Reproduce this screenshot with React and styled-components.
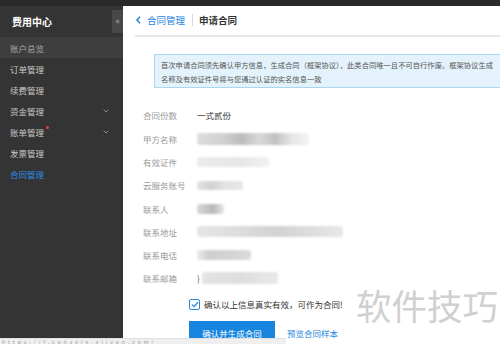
import React from "react";
import styled, { createGlobalStyle } from "styled-components";

const Global = createGlobalStyle`
  html, body { margin: 0; padding: 0; background: #fff; }
  body { font-family: "Noto Sans CJK SC", "Noto Sans", sans-serif; }
  * { box-sizing: border-box; }
`;

const Page = styled.div`
  position: relative;
  width: 500px;
  height: 344px;
  overflow: hidden;
  display: flex;
  flex-direction: column;
`;

const TopBar = styled.div`
  height: 6px;
  background: #2a2a2a;
  flex: none;
`;

const Body = styled.div`
  flex: 1;
  display: flex;
  min-height: 0;
`;

const Sidebar = styled.aside`
  width: 123px;
  flex: none;
  background: #343434;
  position: relative;
  display: flex;
  flex-direction: column;
`;

const SideHead = styled.div`
  height: 31px;
  display: flex;
  align-items: center;
  padding-left: 12px;
  color: #fff;
  font-weight: 700;
  font-size: 10px;
`;

const Collapse = styled.div`
  position: absolute;
  right: 0;
  top: 4px;
  width: 11px;
  height: 23px;
  background: #484848;
  color: #aaa;
  font-size: 8px;
  display: flex;
  align-items: center;
  justify-content: center;
  font-family: "DejaVu Sans", sans-serif;
`;

const MenuItem = styled.div`
  height: 21px;
  display: flex;
  align-items: center;
  padding-left: 10px;
  padding-right: 14px;
  font-size: 8.5px;
  color: ${(p) => (p.$active ? "#2d8ce8" : p.$current ? "#a8a8a8" : "#c9c9c9")};
  background: ${(p) => (p.$current ? "#3e3e3e" : "transparent")};
  position: relative;
`;

const Dot = styled.span`
  width: 3px;
  height: 3px;
  border-radius: 50%;
  background: #e64040;
  align-self: flex-start;
  margin-top: 5px;
  margin-left: 2px;
`;

const Chevron = styled.svg`
  margin-left: auto;
  width: 6px;
  height: 4px;
`;

const Main = styled.main`
  flex: 1;
  background: #fff;
  display: flex;
  flex-direction: column;
  padding-left: 12px;
`;

const Crumbs = styled.div`
  height: 31px;
  display: flex;
  align-items: center;
  font-size: 9.5px;
  border-bottom: 2px solid #e8e8e8;
  padding-left: 1px;
`;

const Back = styled.svg`
  width: 5px;
  height: 8px;
  margin-right: 6px;
`;

const CrumbLink = styled.span`
  color: #1d86df;
`;

const Sep = styled.span`
  width: 1px;
  height: 12px;
  background: #d8d8d8;
  margin: 0 6px 0 7px;
`;

const CrumbTitle = styled.span`
  color: #333;
  font-weight: 700;
`;

const Notice = styled.div`
  margin: 17px 0 0 19px;
  height: 34px;
  background: #e3f2fb;
  border: 1px solid #a9d7f1;
  border-right: none;
  padding: 3px 0 0 6px;
  font-size: 7.3px;
  line-height: 14.5px;
  color: #555;
  white-space: nowrap;
  overflow: hidden;
`;

const Form = styled.div`
  margin-top: 16px;
  padding-left: 8px;
  display: flex;
  flex-direction: column;
`;

const Row = styled.div`
  height: 23.3px;
  display: flex;
  align-items: center;
  font-size: 8.5px;
`;

const Label = styled.span`
  width: 54px;
  color: #9a9a9a;
  flex: none;
`;

const Value = styled.span`
  color: #333;
  display: flex;
  align-items: center;
`;

const Blur = styled.span`
  display: inline-block;
  height: ${(p) => p.$h || 11}px;
  width: ${(p) => p.$w}px;
  border-radius: 3px;
  background: ${(p) => p.$bg};
  filter: blur(1.2px);
`;

const Brace = styled.span`
  color: #666;
  margin-right: 2px;
  font-size: 8px;
`;

const CheckRow = styled.div`
  margin-top: 2px;
  padding-left: 54px;
  height: 24px;
  display: flex;
  align-items: center;
  font-size: 8.5px;
  color: #333;
  white-space: nowrap;
`;

const Box = styled.span`
  width: 11px;
  height: 11px;
  border: 1px solid #2a8ae0;
  border-radius: 2px;
  display: flex;
  align-items: center;
  justify-content: center;
  margin-right: 4px;
  background: #fff;
`;

const Actions = styled.div`
  margin-top: 5px;
  padding-left: 54px;
  display: flex;
  align-items: center;
  gap: 12px;
`;

const Primary = styled.button`
  width: 86px;
  height: 23px;
  border: none;
  background: #1785e0;
  color: #fff;
  font-family: inherit;
  font-size: 8.5px;
  padding: 0;
`;

const LinkText = styled.span`
  color: #1d86df;
  font-size: 8.5px;
`;

const Watermark = styled.div`
  position: absolute;
  left: 356px;
  top: 281px;
  font-size: 35.5px;
  line-height: 48px;
  color: #d0d0d0;
  white-space: nowrap;
  pointer-events: none;
`;

const StatusBar = styled.div`
  position: absolute;
  left: 0;
  bottom: 0;
  width: 286px;
  height: 6px;
  background: #efefef;
  border-top: 1px solid #e0e0e0;
  font-size: 5px;
  line-height: 6px;
  color: #999;
  padding-left: 2px;
  overflow: hidden;
  white-space: nowrap;
  letter-spacing: 3px;
`;

const menu = [
  { t: "账户总览", current: true },
  { t: "订单管理" },
  { t: "续费管理" },
  { t: "资金管理", chevron: true },
  { t: "账单管理", chevron: true, dot: true },
  { t: "发票管理" },
  { t: "合同管理", active: true },
];

const ChevronDown = () => (
  <Chevron viewBox="0 0 6 4">
    <path d="M0.6 0.6 L3 3 L5.4 0.6" fill="none" stroke="#8a8a8a" strokeWidth="1" />
  </Chevron>
);

export default function App() {
  return (
    <Page>
      <Global />
      <TopBar />
      <Body>
        <Sidebar>
          <SideHead>费用中心</SideHead>
          <Collapse>«</Collapse>
          {menu.map((m) => (
            <MenuItem key={m.t} $current={m.current} $active={m.active}>
              {m.t}
              {m.dot && <Dot />}
              {m.chevron && <ChevronDown />}
            </MenuItem>
          ))}
        </Sidebar>
        <Main>
          <Crumbs>
            <Back viewBox="0 0 5 8">
              <path d="M4 0.7 L1 4 L4 7.3" fill="none" stroke="#1d86df" strokeWidth="1.5" />
            </Back>
            <CrumbLink>合同管理</CrumbLink>
            <Sep />
            <CrumbTitle>申请合同</CrumbTitle>
          </Crumbs>
          <Notice>
            首次申请合同须先确认甲方信息，生成合同（框架协议），此类合同唯一且不可自行作废。框架协议生成
            <br />
            名称及有效证件号将与您通过认证的实名信息一致
          </Notice>
          <Form>
            <Row>
              <Label>合同份数</Label>
              <Value>一式贰份</Value>
            </Row>
            <Row>
              <Label>甲方名称</Label>
              <Value>
                <Blur $w={112} $h={12} $bg="linear-gradient(90deg,#ddd 0%,#cfcfcf 25%,#bbb 40%,#d8d8d8 55%,#c2c2c2 70%,#e6e6e6 85%,#f4f4f4 100%)" />
              </Value>
            </Row>
            <Row>
              <Label>有效证件</Label>
              <Value>
                <Blur $w={73} $h={10} $bg="linear-gradient(90deg,#ececec,#e6e6e6 60%,#f2f2f2)" />
              </Value>
            </Row>
            <Row>
              <Label>云服务账号</Label>
              <Value>
                <Blur $w={46} $h={9} $bg="linear-gradient(90deg,#e4e4e4,#d2d2d2 30%,#e2e2e2 60%,#e8e8e8)" />
              </Value>
            </Row>
            <Row>
              <Label>联系人</Label>
              <Value>
                <Blur $w={27} $h={10} $bg="linear-gradient(90deg,#d8d8d8,#b8b8b8 60%,#e8e8e8)" />
              </Value>
            </Row>
            <Row>
              <Label>联系地址</Label>
              <Value>
                <Blur $w={146} $h={11} $bg="linear-gradient(90deg,#e6e6e6,#dcdcdc 30%,#d2d2d2 55%,#dedede 80%,#e8e8e8)" />
              </Value>
            </Row>
            <Row>
              <Label>联系电话</Label>
              <Value>
                <Blur $w={54} $h={10} $bg="linear-gradient(90deg,#ececec,#cfcfcf 20%,#d4d4d4 70%,#dcdcdc)" />
              </Value>
            </Row>
            <Row>
              <Label>联系邮箱</Label>
              <Value>
                <Brace>}</Brace>
                <Blur $w={76} $h={12} $bg="linear-gradient(90deg,#e4e4e4,#dedede 50%,#e8e8e8)" />
              </Value>
            </Row>
          </Form>
          <CheckRow>
            <Box>
              <svg width="8" height="7" viewBox="0 0 8 7">
                <path d="M1 3.6 L3 5.6 L7 1.2" fill="none" stroke="#2a8ae0" strokeWidth="1.3" />
              </svg>
            </Box>
            确认以上信息真实有效，可作为合同!
          </CheckRow>
          <Actions>
            <Primary>确认并生成合同</Primary>
            <LinkText>预览合同样本</LinkText>
          </Actions>
        </Main>
      </Body>
      <Watermark>软件技巧</Watermark>
      <StatusBar>https://f.console.aliyun.com/</StatusBar>
    </Page>
  );
}
